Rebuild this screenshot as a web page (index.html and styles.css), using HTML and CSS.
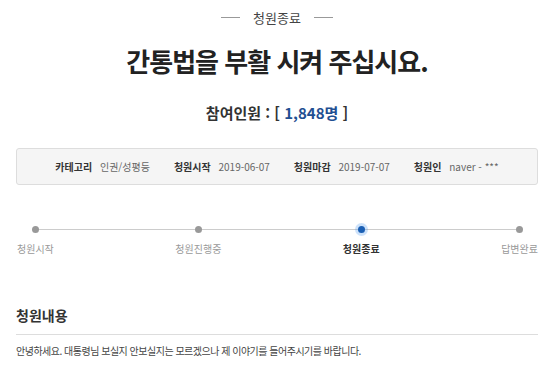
FILE: index.html
```html
<!DOCTYPE html>
<html lang="ko">

<head>
  <meta charset="UTF-8">
  <meta name="viewport" content="width=device-width, initial-scale=1.0">
  <title>청원 상세</title>
  <link rel="stylesheet" href="styles.css">
</head>

<body>
  <div class="petition">
    <div class="status">
      <span class="status-line"></span>
      <span class="status-text">청원종료</span>
      <span class="status-line"></span>
    </div>

    <h1 class="title">간통법을 부활 시켜 주십시요.</h1>

    <div class="count">참여인원 : [ <span class="count-num">1,848명</span> ]</div>

    <ul class="info">
      <li><strong>카테고리</strong> 인권/성평등</li>
      <li><strong>청원시작</strong> 2019-06-07</li>
      <li><strong>청원마감</strong> 2019-07-07</li>
      <li><strong>청원인</strong> naver - ***</li>
    </ul>

    <ol class="steps">
      <li class="step"><span class="dot"></span>청원시작</li>
      <li class="step"><span class="dot"></span>청원진행중</li>
      <li class="step active"><span class="dot"></span>청원종료</li>
      <li class="step"><span class="dot"></span>답변완료</li>
    </ol>

    <h2 class="section-title">청원내용</h2>
    <p class="content">안녕하세요. 대통령님 보실지 안보실지는 모르겠으나 제 이야기를 들어주시기를 바랍니다.</p>
  </div>
</body>

</html>
```

FILE: styles.css
```css
body {
  font-family: 'Noto Sans CJK KR', 'Noto Sans', sans-serif;
  margin: 0;
  background-color: white;
  color: #333;
}

.petition {
  padding: 0 22px 0 16px;
}

.status {
  display: flex;
  justify-content: center;
  align-items: center;
  gap: 13px;
  height: 34px;
  color: #444;
  font-size: 13px;
}

.status-line {
  width: 19px;
  height: 1px;
  background: #999;
}

.title {
  margin: 0;
  padding-top: 9px;
  height: 48px;
  text-align: center;
  font-size: 26px;
  font-weight: bold;
  line-height: 36px;
  color: #222;
  letter-spacing: -1px;
}

.count {
  margin-top: 6px;
  text-align: center;
  font-size: 15px;
  font-weight: bold;
  line-height: 32px;
  color: #333;
}

.count-num {
  color: #1f4f92;
}

.info {
  display: flex;
  justify-content: center;
  gap: 24px;
  list-style: none;
  margin: 19px 0 0;
  padding: 0;
  height: 35px;
  align-items: center;
  background: #f5f5f5;
  border: 1px solid #ddd;
  border-radius: 3px;
  font-size: 10px;
  color: #666;
}

.info strong {
  color: #333;
  margin-right: 5px;
}

.steps {
  position: relative;
  display: flex;
  justify-content: space-between;
  list-style: none;
  margin: 41px 0 0;
  padding: 0 0 0 1px;
}

.steps::before {
  content: "";
  position: absolute;
  top: 3px;
  left: 16px;
  right: 17px;
  height: 1px;
  background: #ccc;
}

.step {
  display: flex;
  flex-direction: column;
  align-items: center;
  gap: 8px;
  font-size: 10px;
  color: #999;
}

.dot {
  position: relative;
  width: 7px;
  height: 7px;
  border-radius: 50%;
  background: #999;
}

.step.active {
  color: #333;
  font-weight: bold;
}

.step.active .dot {
  background: #1a5fb4;
  box-shadow: 0 0 0 3px rgba(90, 160, 240, 0.3);
}

.section-title {
  margin: 49px 0 0;
  padding-bottom: 9px;
  border-bottom: 1px solid #ddd;
  font-size: 14px;
  line-height: 20px;
  color: #333;
}

.content {
  margin: 8px 0 0;
  font-size: 10px;
  letter-spacing: -0.5px;
  color: #444;
}
```
